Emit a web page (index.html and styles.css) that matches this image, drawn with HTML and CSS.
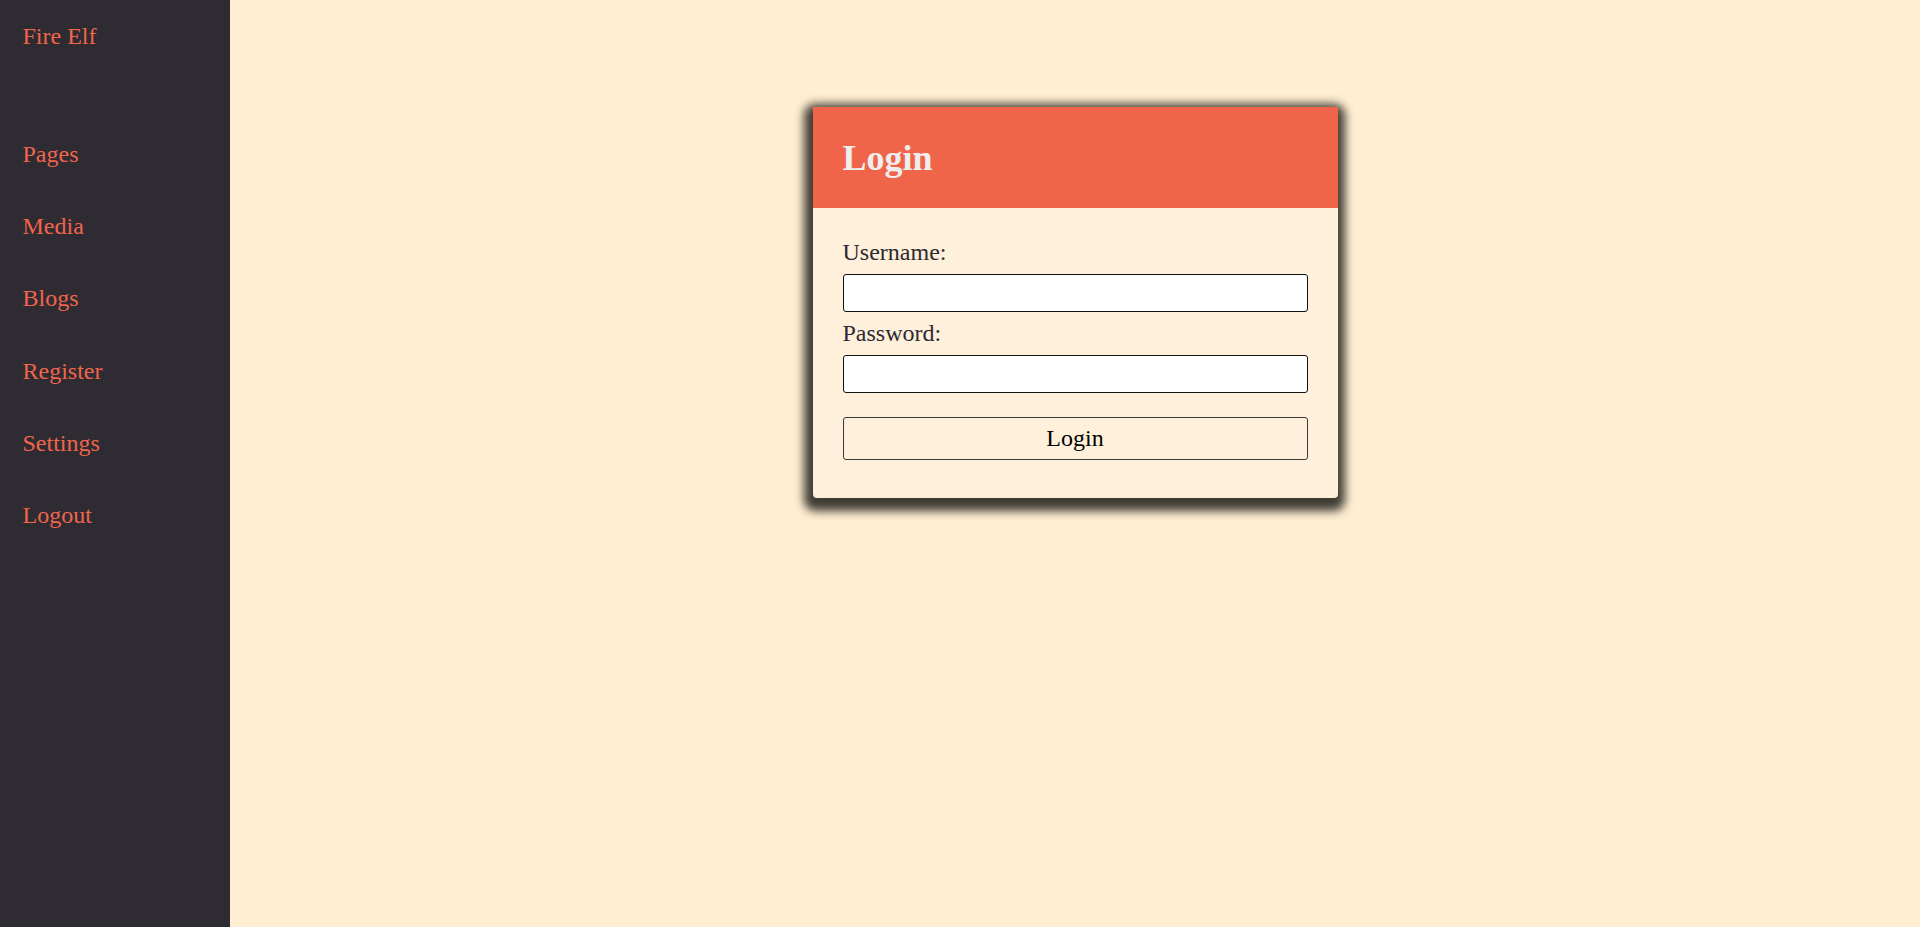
FILE: index.html
```html
<!DOCTYPE html>
<html lang="en">
<head>
<meta charset="utf-8">
<title>Fire Elf - Login</title>
<link rel="stylesheet" href="styles.css">
</head>
<body>
<div class="layout">
  <aside class="sidebar">
    <a class="brand" href="#">Fire Elf</a>
    <nav class="nav">
      <a class="nav-link" href="#">Pages</a>
      <a class="nav-link" href="#">Media</a>
      <a class="nav-link" href="#">Blogs</a>
      <a class="nav-link" href="#">Register</a>
      <a class="nav-link" href="#">Settings</a>
      <a class="nav-link" href="#">Logout</a>
    </nav>
  </aside>
  <main class="main">
    <section class="card">
      <header class="card-header">
        <h2 class="card-title">Login</h2>
      </header>
      <form class="card-body">
        <label class="field-label" for="username">Username:</label>
        <input class="field-input" id="username" type="text">
        <label class="field-label" for="password">Password:</label>
        <input class="field-input" id="password" type="password">
        <button class="submit" type="button">Login</button>
      </form>
    </section>
  </main>
</div>
</body>
</html>
```

FILE: styles.css
```css
* {
  box-sizing: border-box;
}

html, body {
  margin: 0;
  padding: 0;
  height: 100%;
}

body {
  font-family: "Liberation Serif", "Times New Roman", serif;
  font-size: 24px;
  background: #ffeed1;
  color: #2d2a32;
}

.layout {
  display: flex;
  min-height: 100%;
}

.sidebar {
  width: 230px;
  flex: 0 0 230px;
  background: #2e2b32;
  padding: 22px 0 0 22.5px;
  display: flex;
  flex-direction: column;
  min-height: 927px;
}

.brand,
.nav-link {
  color: #f0654b;
  text-decoration: none;
  line-height: 28px;
  display: block;
}

.nav {
  margin-top: 89.8px;
  display: flex;
  flex-direction: column;
  gap: 44.3px;
}

.main {
  flex: 1;
  display: flex;
  justify-content: center;
  align-items: flex-start;
}

.card {
  width: 525px;
  margin-top: 106.7px;
  background: #fef0da;
  border-radius: 4px;
  box-shadow: -1px 5px 10px 8px rgba(0, 0, 0, 0.75);
}

.card-header {
  background: #f0654a;
  padding: 31px 30px 29px;
}

.card-title {
  margin: 0;
  font-size: 36px;
  font-weight: bold;
  color: #eeeeee;
  line-height: 41px;
}

.card-body {
  padding: 31px 30px 30px;
  display: flex;
  flex-direction: column;
}

.field-label {
  display: block;
  line-height: normal;
  color: #2d2a32;
  margin-bottom: 8px;
}

.field-input {
  width: 100%;
  height: 38px;
  border: 1px solid #111;
  border-radius: 3px;
  background: #ffffff;
  margin: 0 0 8px;
  font-family: inherit;
  font-size: 16px;
}

.submit {
  width: 100%;
  height: 43px;
  margin: 16px 0 8px;
  border: 1px solid #3a3a3a;
  border-radius: 3px;
  background: transparent;
  font-family: "Liberation Serif", "Times New Roman", serif;
  font-size: 24px;
  color: #000;
  padding: 0;
}
```
